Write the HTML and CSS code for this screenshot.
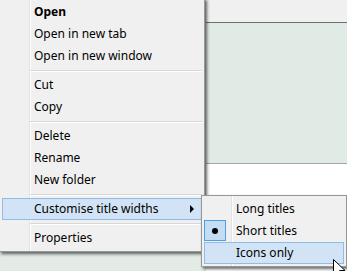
FILE: index.html
```html
<!DOCTYPE html>
<html lang="en">

<head>
  <meta charset="UTF-8" />
  <meta name="viewport" content="width=device-width, initial-scale=1.0" />
  <title>Context menu</title>
  <link rel="stylesheet" href="styles.css">
</head>

<body>
  <div class="escritorio">
    <div class="panel-izq"></div>
    <div class="panel-der">
      <div class="barra"></div>
      <div class="vista"></div>
      <div class="blanco"></div>
    </div>
  </div>

  <ul class="menu principal">
    <li class="item negrita">Open</li>
    <li class="item">Open in new tab</li>
    <li class="item">Open in new window</li>
    <li class="sep"></li>
    <li class="item">Cut</li>
    <li class="item">Copy</li>
    <li class="sep"></li>
    <li class="item">Delete</li>
    <li class="item">Rename</li>
    <li class="item">New folder</li>
    <li class="sep"></li>
    <li class="item activo">Customise title widths<span class="flecha"></span></li>
    <li class="sep"></li>
    <li class="item">Properties</li>
  </ul>

  <ul class="menu submenu">
    <li class="item">Long titles</li>
    <li class="item"><span class="marca"><span class="punto"></span></span>Short titles</li>
    <li class="item activo">Icons only</li>
  </ul>

  <svg class="cursor" width="13" height="20" viewBox="0 0 13 20">
    <path d="M0.5 0.5 L0.5 16.5 L4.5 12.5 L7.5 19 L9.5 18 L6.7 11.5 L12 11.5 Z" fill="#fff" stroke="#000" stroke-width="1" stroke-linejoin="miter"/>
  </svg>
</body>

</html>
```

FILE: styles.css
```css
body {
  margin: 0;
  font-family: "Noto Sans", "Open Sans", sans-serif;
  font-size: 12px;
  color: #000;
  overflow: hidden;
}

.escritorio {
  display: grid;
  grid-template-columns: 206px 1fr;
  height: 271px;
}

.panel-izq {
  background: #e3ebe6;
}

.panel-der {
  display: flex;
  flex-direction: column;
}

.barra {
  height: 22px;
  background: #f0f0f0;
  border-bottom: 1px solid #6e6e6e;
}

.vista {
  height: 140px;
  background: #e0ebe5;
  border-bottom: 1px solid #a5a5a5;
}

.blanco {
  flex: 1;
  background: #fff;
}

/* menus flotantes */
.menu {
  position: absolute;
  margin: 0;
  padding: 2px;
  list-style: none;
  background: #f0f0f0;
  border: 1px solid #979797;
  box-shadow: 2px 2px 3px rgba(0, 0, 0, 0.6);
  background-image: linear-gradient(to right, transparent 29px, #e2e2e2 29px, #e2e2e2 30px, #fff 30px, #fff 31px, transparent 31px);
}

.principal {
  left: -1px;
  top: -2px;
  width: 200px;
}

.submenu {
  left: 201px;
  top: 195px;
  width: 140px;
}

.item {
  position: relative;
  height: 20px;
  line-height: 20px;
  padding-left: 31px;
  border: 1px solid transparent;
  white-space: nowrap;
}

.negrita {
  font-weight: bold;
}

.activo {
  background: #d1e3f5;
  border-color: #8fbde9;
}

.sep {
  height: 1px;
  margin: 3px 0 2px 28px;
  background: #d7d7d7;
  border-bottom: 1px solid #fff;
}

.flecha {
  position: absolute;
  right: 7px;
  top: 6px;
  border-left: 4px solid #000;
  border-top: 4px solid transparent;
  border-bottom: 4px solid transparent;
}

.marca {
  position: absolute;
  left: 0;
  top: 0;
  width: 20px;
  height: 19px;
  background: #c5ddf2;
  border: 1px solid #4fa0e2;
  margin: -1px 0 0 -1px;
}

.punto {
  position: absolute;
  left: 7px;
  top: 7px;
  width: 6px;
  height: 6px;
  border-radius: 50%;
  background: #000;
}

.cursor {
  position: absolute;
  left: 333px;
  top: 259px;
}
```
